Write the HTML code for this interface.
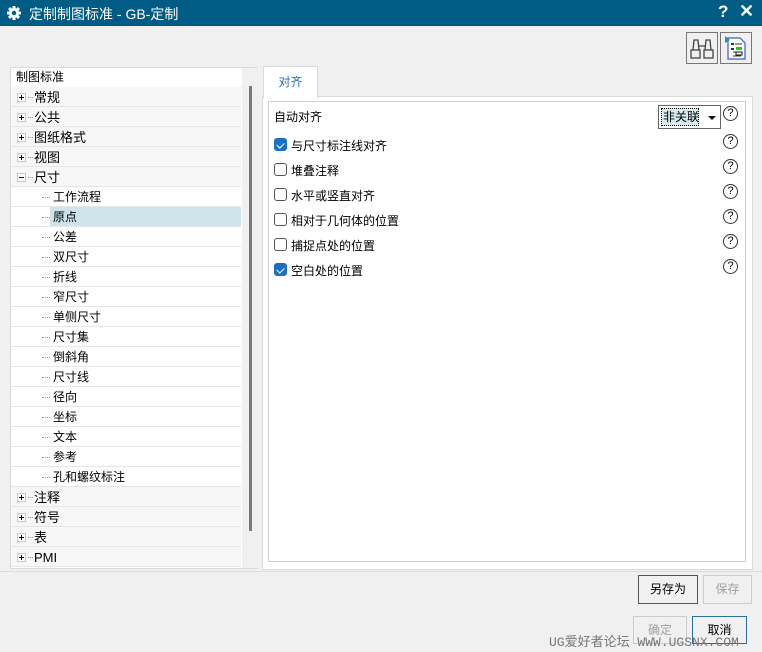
<!DOCTYPE html>
<html><head><meta charset="utf-8"><style>
*{margin:0;padding:0;box-sizing:border-box}
body{width:762px;height:652px;background:#f0f0f0;font-family:"Liberation Sans","Noto Sans CJK SC",sans-serif;font-size:12px;color:#000;position:relative;overflow:hidden}
.a{position:absolute}
.title{left:0;top:0;width:762px;height:26px;background:#005c85;color:#fff;font-size:14px}
.tree{left:10px;top:67px;width:248px;height:502px;background:#fff;border:1px solid #d9d9d9}
.row{position:absolute;left:1px;width:230px;height:20px;border-bottom:1px solid #e6e6e6;line-height:19px}
.top{background:#f7f7f7}
.pm{position:absolute;left:6px;top:6px;width:9px;height:9px;border:1px solid #c8c8c8;background:#fff}
.pm:before{content:"";position:absolute;left:1px;top:3px;width:5px;height:1px;background:#000}
.pm.p:after{content:"";position:absolute;left:3px;top:1px;width:1px;height:5px;background:#000}
.dot{position:absolute;border-top:1px dotted #999;height:0}
.btn{position:absolute;border:1px solid #adadad;background:#f0f0f0;text-align:center;line-height:26px}
.cb{position:absolute;left:274px;width:13px;height:13px;border:1px solid #555;border-radius:3px;background:#fff}
.cb.c{background:#1a6fc9;border-color:#1a6fc9}
.cb.c:after{content:"";position:absolute;left:3px;top:2px;width:4px;height:6px;border:solid #fff;border-width:0 1px 1px 0;transform:rotate(45deg)}
.lbl{position:absolute;left:291px}
.q{position:absolute;left:723px;width:15px;height:15px;border:1px solid #333;border-radius:50%;font-size:11px;text-align:center;line-height:13px}
</style></head><body>
<div class="a title">
<svg class="a" style="left:6px;top:5px" width="16" height="16" viewBox="0 0 16 16"><g fill="#fff"><circle cx="8" cy="8" r="5"/><rect x="6.5" y="1" width="3" height="14"/><rect x="1" y="6.5" width="14" height="3"/><rect x="6.5" y="1" width="3" height="14" transform="rotate(45 8 8)"/><rect x="6.5" y="1" width="3" height="14" transform="rotate(-45 8 8)"/></g><circle cx="8" cy="8" r="2.2" fill="#005c85"/></svg>
<div class="a" style="left:29px;top:4px">定制制图标准 - GB-定制</div>
<div class="a" style="left:718px;top:2px;font-size:17px;font-weight:bold">?</div>
<div class="a" style="left:739px;top:1px;font-size:18px;font-weight:bold">✕</div>
</div>
<div class="a" style="left:686px;top:32px;width:32px;height:32px;border:1px solid #777"><svg width="30" height="30" viewBox="0 0 30 30"><g fill="none" stroke="#444" stroke-width="1.3"><rect x="4" y="17" width="9" height="8"/><rect x="17" y="17" width="9" height="8"/><path d="M6 17 L7 7 H11 L12 17 M18 17 L19 7 H23 L24 17 M12 13 H18"/></g></svg></div>
<div class="a" style="left:720px;top:32px;width:32px;height:32px;border:1px solid #777"><svg width="30" height="30" viewBox="0 0 30 30"><path d="M7 5 H19 L24 10 V26 H7 Z" fill="#fff" stroke="#3a5bd0" stroke-width="1.2"/><path d="M4 3 L9 7 L4 10 Z" fill="#2a8ac8"/><rect x="10" y="10" width="3" height="2" fill="#333"/><rect x="10" y="15" width="3" height="2" fill="#333"/><path d="M14 11 H21 M12 19 H21 M12 23 H20" stroke="#333"/><rect x="15" y="14" width="6" height="3" fill="#2c2"/><rect x="15" y="19" width="6" height="3" fill="none" stroke="#111"/></svg></div>

<div class="a tree">
<div class="row" style="top:0;padding-left:4px;background:#fff">制图标准</div>
<div class="a" style="left:231px;top:0;width:16px;height:500px;background:#f0f0f0"></div>
<div class="a" style="left:238px;top:18px;width:3px;height:445px;background:#7a7a7a"></div>
<div class="a" style="left:10px;top:30px;height:460px;border-left:1px dotted #999"></div>
<div class="a" style="left:30px;top:130px;height:280px;border-left:1px dotted #999"></div>
</div>
<div id="rows"></div>
<script>
var items=[["常规",0,1],["公共",0,1],["图纸格式",0,1],["视图",0,1],["尺寸",0,0],["工作流程",1],["原点",1],["公差",1],["双尺寸",1],["折线",1],["窄尺寸",1],["单侧尺寸",1],["尺寸集",1],["倒斜角",1],["尺寸线",1],["径向",1],["坐标",1],["文本",1],["参考",1],["孔和螺纹标注",1],["注释",0,1],["符号",0,1],["表",0,1],["PMI",0,1]];
var h="";items.forEach(function(it,i){var t=87+i*20;
if(it[1]==0){h+='<div class="row top" style="left:11px;top:'+t+'px"><div class="pm'+(it[2]?' p':'')+'"></div><div class="dot" style="left:17px;top:10px;width:5px"></div><span style="position:absolute;left:23px;top:1px;font-size:13px">'+it[0]+'</span></div>';}
else{var sel=it[0]=="原点";h+='<div class="row" style="left:11px;top:'+t+'px;background:#fff"><div class="dot" style="left:31px;top:10px;width:8px"></div><span style="position:absolute;left:39px;top:0;width:191px;padding-left:3px;height:19px;line-height:21px;'+(sel?'background:#cce4ea':'')+'">'+it[0]+'</span></div>';}});
document.getElementById("rows").innerHTML=h;
</script>

<div class="a" style="left:262px;top:96px;width:491px;height:474px;border:1px solid #d9d9d9;background:#fff"></div>
<div class="a" style="left:268px;top:101px;width:478px;height:461px;border:1px solid #d0d0d0;background:#fff"></div>
<div class="a" style="left:263px;top:66px;width:55px;height:32px;border:1px solid #d9d9d9;border-bottom:none;background:#fff;color:#2a6fb8;text-align:center;line-height:30px">对齐</div>
<div class="a" style="left:274px;top:108px">自动对齐</div>
<div class="a" style="left:658px;top:105px;width:63px;height:24px;border:1px solid #666;background:#fff"><div class="a" style="left:2px;top:2px;width:38px;height:18px;border:1px dotted #000;background:#d7ecf0;line-height:16px;padding-left:1px;white-space:nowrap;font-size:12px">非关联</div><div class="a" style="left:49px;top:10px;border:4px solid transparent;border-top:4px solid #000"></div></div>
<div class="q" style="top:106px">?</div>
<div class="cb c" style="top:138px"></div><div class="lbl" style="top:137px">与尺寸标注线对齐</div><div class="q" style="top:134px">?</div>
<div class="cb" style="top:163px"></div><div class="lbl" style="top:162px">堆叠注释</div><div class="q" style="top:159px">?</div>
<div class="cb" style="top:188px"></div><div class="lbl" style="top:187px">水平或竖直对齐</div><div class="q" style="top:184px">?</div>
<div class="cb" style="top:213px"></div><div class="lbl" style="top:212px">相对于几何体的位置</div><div class="q" style="top:209px">?</div>
<div class="cb" style="top:238px"></div><div class="lbl" style="top:237px">捕捉点处的位置</div><div class="q" style="top:234px">?</div>
<div class="cb c" style="top:263px"></div><div class="lbl" style="top:262px">空白处的位置</div><div class="q" style="top:259px">?</div>

<div class="a" style="left:0;top:571px;width:762px;height:1px;background:#dcdcdc"></div>
<div class="btn" style="left:638px;top:575px;width:60px;height:29px;border-color:#555">另存为</div>
<div class="btn" style="left:703px;top:575px;width:49px;height:29px;border-color:#ccc;color:#a0a0a0">保存</div>
<div class="btn" style="left:633px;top:616px;width:54px;height:28px;border-color:#ccc;color:#a0a0a0">确定</div>
<div class="btn" style="left:692px;top:616px;width:55px;height:28px;border-color:#2a6f9a">取消</div>
<div class="a" style="left:549px;top:631px;font-family:'Liberation Mono','Noto Sans CJK SC',monospace;font-size:13px;color:#777;white-space:nowrap">UG爱好者论坛 WWW.UGSNX.COM</div>
</body></html>
